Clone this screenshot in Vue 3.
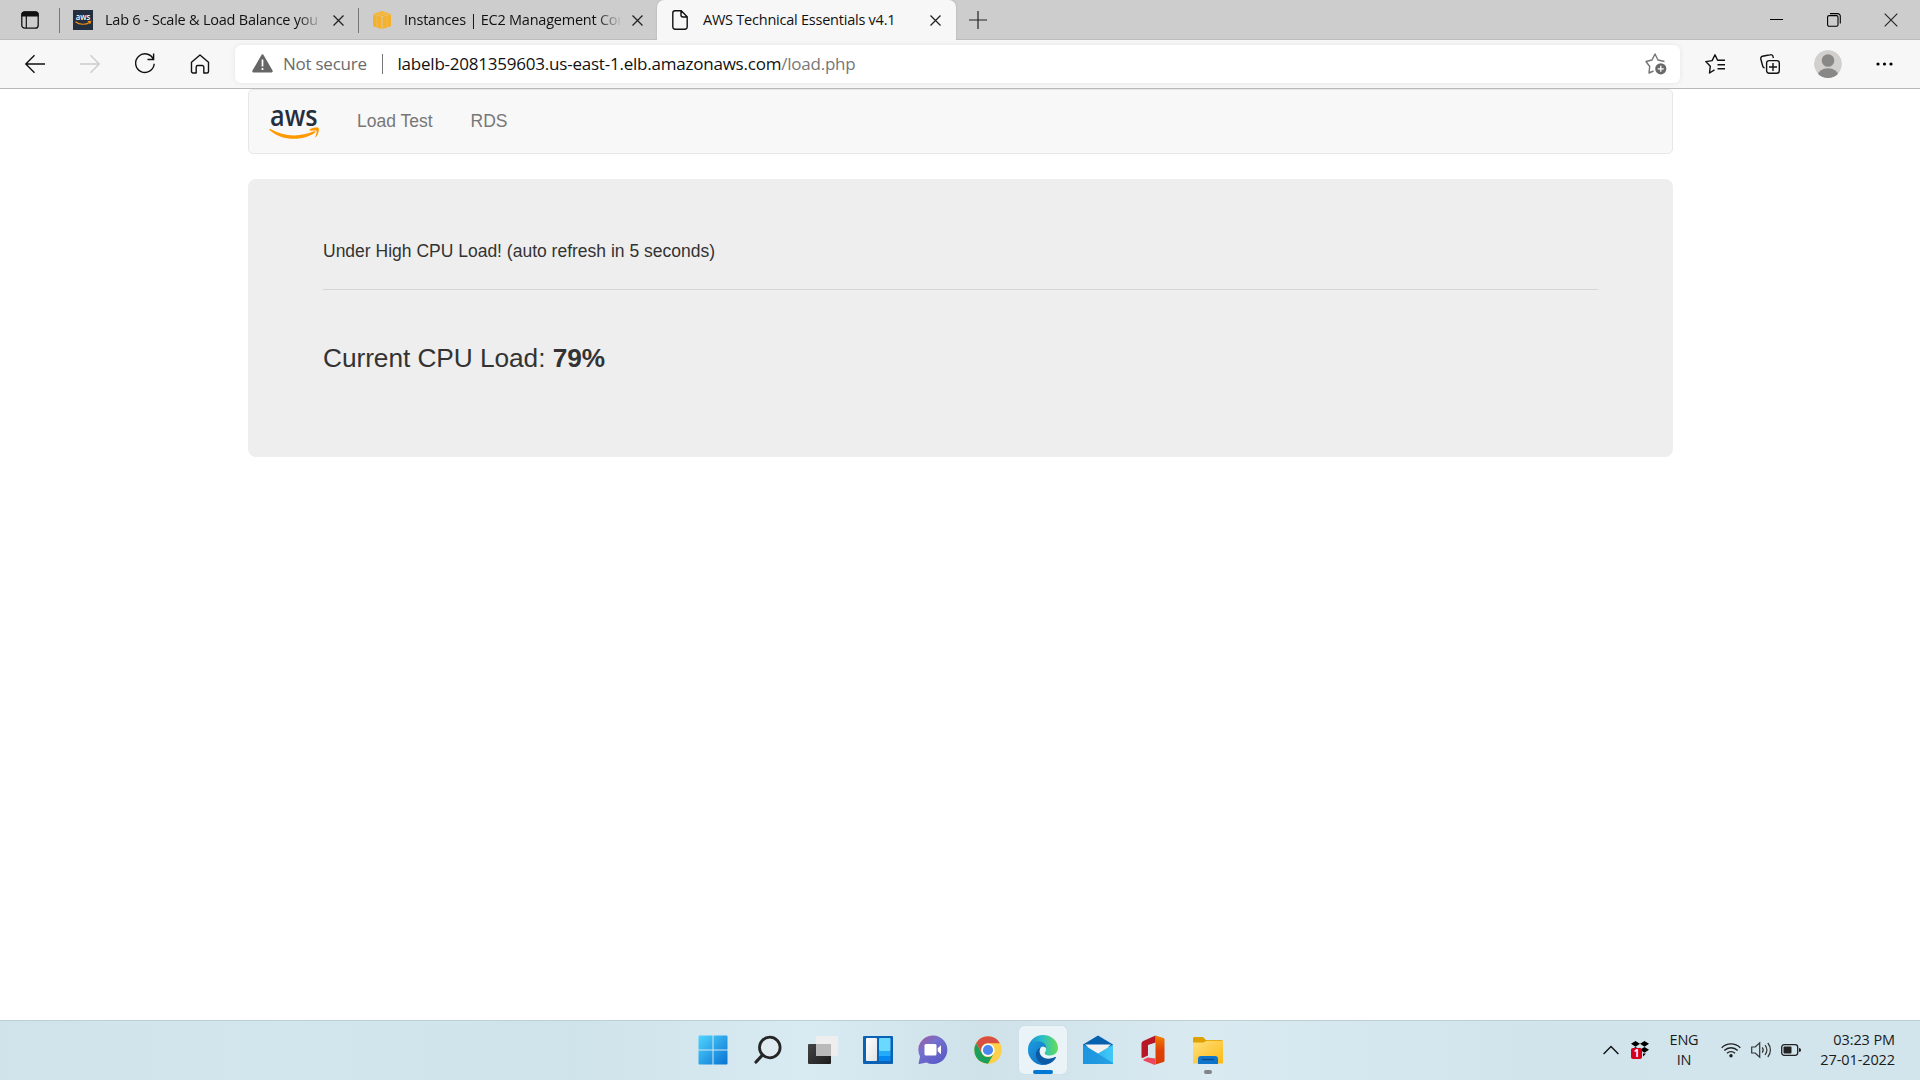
<script setup>
const inactiveTabs = [
  { id: 'lab', title: 'Lab 6 - Scale & Load Balance you' },
  { id: 'ec2', title: 'Instances | EC2 Management Con' },
]
</script>

<template>
  <div class="screen">
    <header class="tabstrip">
      <svg class="tab-actions" width="18" height="18" viewBox="0 0 18 18"><rect x=".8" y=".8" width="16.4" height="16.4" rx="3" fill="none" stroke="#111" stroke-width="1.3" /><path d="M1 5V3a2 2 0 0 1 2-2h12a2 2 0 0 1 2 2v2zM5.3 5v12" stroke="#111" fill="#111" stroke-width="1.2" /></svg>
      <div v-for="tab in inactiveTabs" :key="tab.id" class="tab" :class="tab.id">
        <svg v-if="tab.id === 'lab'" class="fav" width="20" height="20" viewBox="0 0 20 20">
          <rect width="20" height="20" fill="#232f3e" />
          <text x="2.7" y="10.3" textLength="14.5" lengthAdjust="spacingAndGlyphs" font-family="Open Sans, sans-serif" font-weight="600" font-size="9.5" fill="#fff">aws</text>
          <path d="M2.5 11.7c4 3.2 10 3.3 14 .8M14.8 11.5l2.8-.2-.8 2.5" fill="none" stroke="#f29111" stroke-width="1.2" />
        </svg>
        <svg v-else class="fav" width="20" height="20" viewBox="0 0 20 20"><path d="M1 4l9-3 9 3-9 2.400z" fill="#f9b52a" /><path d="M1 4.600l8.600 2.200V19L1 16.300zM19 4.600l-8.600 2.200V19l8.600-2.700z" fill="#f6b02a" /><path d="M4.900 5.800v12M15.100 5.800v12M10 7v12M4.500 3L10 4.400 15.500 3" stroke="#e0c078" fill="none" stroke-width=".8" /></svg>
        <span class="tab-title">{{ tab.title }}</span>
        <svg class="x" width="11" height="11" viewBox="0 0 11 11"><path d="M.5.5l10 10M10.5.5l-10 10" stroke="#222" stroke-width="1.3" /></svg>
      </div>
      <div class="tab active">
        <svg class="doc" width="16" height="20" viewBox="0 0 16 20"><path d="M3 .8h6.200l6 6V17a2.200 2.200 0 0 1-2.200 2.200H3A2.200 2.200 0 0 1 .8 17V3A2.200 2.200 0 0 1 3 .8zM9 1v4a2 2 0 0 0 2 2h4" fill="none" stroke="#111" stroke-width="1.400" /></svg>
        <span class="tab-title">AWS Technical Essentials v4.1</span>
        <svg class="x" width="11" height="11" viewBox="0 0 11 11"><path d="M.5.5l10 10M10.5.5l-10 10" stroke="#222" stroke-width="1.3" /></svg>
      </div>
      <svg class="plus" width="18" height="18" viewBox="0 0 18 18"><path d="M9 0v18M0 9h18" stroke="#222" stroke-width="1.2" /></svg>
      <div class="window-controls">
        <svg width="13" height="14" viewBox="0 0 13 14"><path d="M0 6.500h13" stroke="#000" /></svg>
        <svg width="14" height="14" viewBox="0 0 14 14"><rect x=".6" y="2.6" width="10.400" height="10.600" rx="1.500" fill="none" stroke="#000" stroke-width="1.1" /><path d="M3 .6h7.500a2.700 2.700 0 0 1 2.800 2.800V10.500" fill="none" stroke="#000" stroke-width="1.1" /></svg>
        <svg width="14" height="14" viewBox="0 0 14 14"><path d="M.7.7l12.600 12.600M13.300.7L.7 13.300" stroke="#222" stroke-width="1.1" /></svg>
      </div>
    </header>

    <div class="toolbar">
      <svg class="nav back" width="20" height="20" viewBox="0 0 20 20"><path d="M20 10H.8M9.500 1.200L.8 10l8.700 8.800" fill="none" stroke="#111" stroke-width="1.400" /></svg>
      <svg class="nav" width="20" height="20" viewBox="0 0 20 20"><path d="M0 10h19.200M10.500 1.200L19.200 10l-8.700 8.800" fill="none" stroke="#ccc" stroke-width="1.400" /></svg>
      <svg class="nav" width="20" height="21" viewBox="0 0 20 21"><path d="M18.500 6.500A9.300 9.300 0 1 0 19.200 10.800M18.600.5v6H12.500" fill="none" stroke="#111" stroke-width="1.400" /></svg>
      <svg class="nav" width="20" height="20" viewBox="0 0 20 20"><path d="M1.500 8.200L10 1l8.500 7.200V17.500a1.500 1.500 0 0 1-1.500 1.500h-3.200V13a1.500 1.500 0 0 0-1.500-1.500H7.700A1.500 1.500 0 0 0 6.200 13v6H3a1.500 1.500 0 0 1-1.500-1.500z" fill="none" stroke="#111" stroke-width="1.400" stroke-linejoin="round" /></svg>
      <div class="address">
        <svg width="21" height="19" viewBox="0 0 21 19"><path d="M10.500 1.500L19.500 17.200H1.500z" fill="#666" stroke="#666" stroke-width="2.400" stroke-linejoin="round" /><path d="M10.500 5.500v7M10.500 14v2" stroke="#fff" stroke-width="1.700" /></svg>
        <span class="not-secure">Not secure</span>
        <i class="bar"></i>
        <span class="url">labelb-2081359603.us-east-1.elb.amazonaws.com<em>/load.php</em></span>
        <svg class="star" width="22" height="22" viewBox="0 0 22 22"><path d="M8.500 18L4 20l.7-6.500L1 8.500l6-1.500 3-6 3 6 6.500 1.500" fill="none" stroke="#757575" stroke-width="1.400" stroke-linejoin="round" /><circle cx="15.800" cy="15.800" r="5.600" fill="#696969" /><path d="M15.800 12.800v6M12.800 15.800h6" stroke="#fff" stroke-width="1.300" /></svg>
      </div>
      <svg class="favorites" width="20" height="20" viewBox="0 0 20 20"><path d="M9.500 15.800L4.500 19l.8-6.800L.8 7.600l6.300-1L10 .8l2.600 5.500H20M12.500 10.700H20M12.500 14.800H20" fill="none" stroke="#111" stroke-width="1.400" stroke-linejoin="round" /></svg>
      <svg class="collections" width="20" height="20" viewBox="0 0 20 20"><path d="M4.500 14A3 3 0 0 1 2.700 12L.8 5a2.200 2.200 0 0 1 1.600-2.700L10.300.7A2.200 2.200 0 0 1 13 2.400l.4 1.600" fill="none" stroke="#111" stroke-width="1.400" /><rect x="6.600" y="6.600" width="12.700" height="12.700" rx="2.500" fill="none" stroke="#111" stroke-width="1.400" /><path d="M13 9v8M9 13h8" stroke="#111" stroke-width="1.400" /></svg>
      <svg class="avatar" width="28" height="28" viewBox="0 0 28 28"><defs><clipPath id="avatar-clip"><circle cx="14" cy="14" r="14" /></clipPath></defs><g clip-path="url(#avatar-clip)"><circle cx="14" cy="14" r="14" fill="#d2d0ce" /><circle cx="14" cy="10.500" r="6.300" fill="#8a8886" /><ellipse cx="14" cy="26" rx="10.500" ry="7.800" fill="#8a8886" /></g></svg>
      <svg class="dots" width="17" height="4" viewBox="0 0 17 4"><circle cx="2" cy="2" r="1.600" /><circle cx="8.500" cy="2" r="1.600" /><circle cx="15" cy="2" r="1.600" /></svg>
    </div>

    <main class="page">
      <nav class="navbar">
        <svg class="logo" width="52" height="34" viewBox="0 0 52 34">
          <text x="1" y="18.500" textLength="47.500" lengthAdjust="spacingAndGlyphs" font-family="Open Sans, sans-serif" font-weight="600" font-size="28" fill="#252f3e">aws</text>
          <path d="M.3 22.500c0-.6.700-.8 1.200-.5 13 7.800 29.500 8.300 43.500 2.300 1.200-.5 2 .6.900 1.400C34 34 13 34.500.8 23.200z" fill="#f90" />
          <path d="M40.800 22.300c2.500-1.800 8-2.100 8.800-1.200.8 1-.2 6.800-2.700 9-.5.500-1 .2-.7-.4.600-1.500 1.900-4.900 1.300-5.800-.600-.8-4-.400-6-.2-.900.100-1.200-.8-.7-1.400z" fill="#f90" />
        </svg>
        <a class="link-load">Load Test</a>
        <a>RDS</a>
      </nav>
      <section class="jumbotron">
        <p class="status">Under High CPU Load! (auto refresh in 5 seconds)</p>
        <hr />
        <p class="load">Current CPU Load: <b>79%</b></p>
      </section>
    </main>

    <footer class="taskbar">
      <div class="apps">
        <div class="app"><svg width="30" height="30" viewBox="0 0 30 30"><defs><linearGradient id="win" x2="1" y2="1"><stop stop-color="#4fd5ff" /><stop offset="1" stop-color="#0872d2" /></linearGradient></defs><path d="M1.500.5H14.500V14.500H.5V1.500a1 1 0 0 1 1-1zM15.500.5H28.500a1 1 0 0 1 1 1V14.500H15.500zM.5 15.500H14.500V29.500H1.500a1 1 0 0 1-1-1zM15.500 15.500H29.500V28.500a1 1 0 0 1-1 1H15.500z" fill="url(#win)" /></svg></div>
        <div class="app"><svg width="30" height="30" viewBox="0 0 30 30"><circle cx="16.800" cy="12.500" r="10.300" fill="#e4edf1" fill-opacity=".6" stroke="#262626" stroke-width="2.800" /><path d="M9.500 20L3 27" stroke="#262626" stroke-width="3.200" stroke-linecap="round" /></svg></div>
        <div class="app"><svg width="30" height="30" viewBox="0 0 30 30"><defs><linearGradient id="tv" x2="1" y2="1"><stop stop-color="#444" /><stop offset="1" stop-color="#1d1d1d" /></linearGradient></defs><rect y="9" width="23" height="20" rx="1" fill="url(#tv)" /><rect x="8" y="1" width="22" height="20" rx="1" fill="#eee" /><rect x="8" y="9" width="15" height="12" fill="#b9b9b9" /></svg></div>
        <div class="app"><svg width="30" height="30" viewBox="0 0 30 30"><defs><linearGradient id="wg" y2="1"><stop stop-color="#fff" /><stop offset="1" stop-color="#e2e2e2" /></linearGradient></defs><rect y="1" width="30" height="28" rx="1" fill="#0b62b5" /><rect x="3" y="3" width="11" height="23" rx="1" fill="url(#wg)" /><rect x="16" y="3" width="11.500" height="13" rx="1" fill="#6ad9ff" /><rect x="16" y="16" width="11.500" height="5" fill="#24acf8" /><rect x="16" y="21" width="11.500" height="5" fill="#0788ee" /></svg></div>
        <div class="app"><svg width="30" height="30" viewBox="0 0 30 30"><defs><linearGradient id="chat" x1=".1" y1="0" x2=".9" y2="1"><stop stop-color="#a35b9c" /><stop offset=".35" stop-color="#7470ce" /><stop offset="1" stop-color="#5757c5" /></linearGradient></defs><path d="M15 .5a14.300 14.300 0 1 1-6.500 27L1.500 29c-.8.1-1-.3-.8-1L2 21.500A14.300 14.300 0 0 1 15 .5z" fill="url(#chat)" /><rect x="6.500" y="9" width="12" height="11.500" rx="1.500" fill="#fff" /><path d="M19.700 13.200l3.300-3v9l-3.300-3z" fill="#fff" /></svg></div>
        <div class="app"><svg width="28" height="28" viewBox="0 0 28 28"><circle cx="14" cy="14" r="13.700" fill="#fcd04b" /><path d="M2.100 7.200A13.700 13.700 0 0 1 25.900 7.200H14a6.800 6.800 0 0 0-6 10.200z" fill="#d94f43" /><path d="M2.100 7.200A13.700 13.700 0 0 0 14 27.700L20 17.300a6.800 6.800 0 0 1-12 .1z" fill="#1c9f5b" /><circle cx="14" cy="14" r="6.600" fill="#fff" /><circle cx="14" cy="14" r="5.100" fill="#4a87f1" /></svg></div>
        <div class="app current"><svg width="30" height="30" viewBox="0 0 30 30"><defs><linearGradient id="e1"><stop stop-color="#1b88d3" /><stop offset=".45" stop-color="#27bccc" /><stop offset="1" stop-color="#66dd56" /></linearGradient><linearGradient id="e2" y2="1"><stop stop-color="#1b9de2" /><stop offset="1" stop-color="#116bbb" /></linearGradient></defs><path d="M0 14A15 15 0 0 1 15 0C24 0 30 6.500 30 13c0 4.500-3.500 7.500-8 7.500-4.500 0-6-1.700-5-3.200C20.500 12.500 15 8 8.500 8 3.500 8 1 11 0 14z" fill="url(#e1)" /><path d="M0 14c.5-4 4-7.800 9.500-7.800 5.500 0 9 3 9 7.800 0-1.500-2-2.500-4-2.500-6 2-6.500 16 5 17.800A15 15 0 0 1 0 14z" fill="url(#e2)" /><path d="M12.600 12.700C9 14 7.300 17.500 8.200 21.500 9.800 27.500 15 30 19.500 29.300c4-1 6.500-3.300 8.400-6.500.4-.8-.3-1.100-1-.700-7 3.600-15 1-15.300-5.500 0-1.500.5-2.900 1-3.900z" fill="#0c59a4" /></svg></div>
        <div class="app"><svg width="30" height="30" viewBox="0 0 30 30"><defs><linearGradient id="mail" x2="1"><stop stop-color="#23a5eb" /><stop offset="1" stop-color="#42c9f6" /></linearGradient></defs><path d="M0 9.500L15 .5l15 9V12H0z" fill="#0861ae" /><path d="M2 9.500h26L15 21z" fill="#f2f2f2" /><path d="M0 9.500l15 9 15-9V29H0z" fill="url(#mail)" /><path d="M0 9.500L30 28v1H0z" fill="#188bd9" opacity=".65" /></svg></div>
        <div class="app"><svg width="24" height="30" viewBox="0 0 24 30"><defs><linearGradient id="off" x2="0" y2="1"><stop stop-color="#f28100" /><stop offset=".5" stop-color="#df4307" /><stop offset="1" stop-color="#d73b02" /></linearGradient></defs><path d="M14.500.5l8 2.500a1.500 1.500 0 0 1 1 1.500v21a1.500 1.500 0 0 1-1 1.500l-8 2.500z" fill="url(#off)" /><path d="M14.500.5v7L7 10v10.500L1.500 23A1 1 0 0 1 .5 22V8.500A3 3 0 0 1 2.200 6z" fill="#b91727" /><path d="M2.500 24.500l4-2 8 1v6a3 3 0 0 1-2 0l-10-4z" fill="#ef465b" /></svg></div>
        <div class="app explorer"><svg width="30" height="28" viewBox="0 0 30 28"><defs><linearGradient id="folder" x2="1" y2="1"><stop stop-color="#ffe07b" /><stop offset="1" stop-color="#fcb914" /></linearGradient></defs><path d="M0 8V2.500A1.500 1.500 0 0 1 1.500 1H10l3 3h15.500A1.500 1.500 0 0 1 30 5.500V9H0z" fill="#dfa001" /><path d="M0 6.500h10.500l3-1.700H30V27.500H0z" fill="url(#folder)" /><path d="M5 28v-5a3 3 0 0 1 3-3h14a3 3 0 0 1 3 3v5z" fill="#0f75cb" /><path d="M9 23.500h12" stroke="#0a4a86" stroke-width="1.300" /></svg></div>
      </div>
      <div class="tray">
        <svg class="chevron" width="16" height="10" viewBox="0 0 16 10"><path d="M.6 9L8 1.500 15.400 9" fill="none" stroke="#111" stroke-width="1.400" /></svg>
        <div class="dropbox">
          <svg width="18" height="17" viewBox="0 0 18 17"><path d="M4.500 0L9 2.800 4.500 5.700 0 2.800zM13.500 0L18 2.800l-4.500 2.900L9 2.800zM4.500 6L9 8.800l-4.500 2.900L0 8.800zM13.500 6L18 8.800l-4.500 2.900L9 8.800zM12 12.500h3l-3 3z" /></svg>
          <span class="badge">1</span>
        </div>
        <div class="lang"><span>ENG</span><span>IN</span></div>
        <svg class="wifi" width="20" height="16" viewBox="0 0 20 16"><path d="M.7 5.800a13.200 13.200 0 0 1 18.600 0M3.300 8.500a9.500 9.500 0 0 1 13.400 0M6 11.200a5.700 5.700 0 0 1 8 0" fill="none" stroke="#222" stroke-width="1.300" /><circle cx="10" cy="13.800" r="1.700" fill="#222" /></svg>
        <svg class="speaker" width="21" height="18" viewBox="0 0 21 18"><path d="M.7 6h3.500L8.700 1.800v14.400L4.200 12H.7zM11.200 6.300c1.200 1.600 1.200 3.800 0 5.400M14 4.200c2.300 2.900 2.300 6.700 0 9.600M16.800 2c3.500 4.200 3.500 9.800 0 14" fill="none" stroke="#333" stroke-width="1.200" /></svg>
        <svg class="battery" width="20" height="12" viewBox="0 0 20 12"><rect x=".7" y=".7" width="16" height="10.600" rx="2.500" fill="none" stroke="#222" stroke-width="1.300" /><rect x="2.500" y="2.500" width="8" height="7" rx="1" fill="#222" /><path d="M18 4v4c1.500 0 2-1 2-2s-.5-2-2-2z" fill="#222" /></svg>
        <div class="clock"><span class="time">03:23 PM</span><span>27-01-2022</span></div>
      </div>
    </footer>
  </div>
</template>

<style>
body { margin: 0; background: #fff; }
</style>

<style scoped>
* { box-sizing: border-box; }
svg { display: block; flex: none; overflow: visible; }
.screen { width: 1920px; height: 1080px; display: flex; flex-direction: column; overflow: hidden; font-family: "Open Sans", "Noto Sans", sans-serif; background: #fff; }
.tabstrip { height: 40px; display: flex; align-items: center; background: #cdcdcd; box-shadow: inset 0 -1px #bcbcbc; flex: none; }
.tab-actions { margin: 0 20px 0 21px; }
.tab { height: 40px; display: flex; align-items: center; width: 299px; flex: none; position: relative; }
.tab:not(.active)::before { content: ""; position: absolute; left: 0; top: 8px; width: 1px; height: 25px; background: #777; }
.fav { margin-left: 14px; }
.tab-title { margin-left: 12px; width: 216px; white-space: nowrap; font-size: 14.5px; line-height: 22px; letter-spacing: -.23px; color: #111; }
.tab:not(.active) .tab-title { -webkit-mask: linear-gradient(90deg, #000 89%, transparent 101%); mask: linear-gradient(90deg, #000 89%, transparent 101%); }
.x { margin: 1px 0 0 12px; }
.active { background: #f7f7f7; border-radius: 7px 7px 0 0; box-shadow: 0 0 2px #aaa; clip-path: inset(0 -3px 0 -3px); }
.doc { margin-left: 15px; }
.active .tab-title { margin-left: 15px; width: 214px; }
.active .x { margin-left: 13px; }
.plus { margin-left: 13px; }
.window-controls { margin: 0 22px 0 auto; display: flex; align-items: center; gap: 43.5px; }
.toolbar { height: 49px; display: flex; align-items: center; padding-bottom: 1px; background: #f7f7f7; border-bottom: 1px solid #b8b8b8; flex: none; }
.nav { margin-right: 35px; }
.nav.back { margin-left: 25px; }
.address { margin-left: -10px; width: 1445px; height: 38px; border-radius: 6px; background: #fff; box-shadow: 0 0 5px #e4e4e4; display: flex; align-items: center; padding: 0 13px 0 17px; font-size: 17px; line-height: 26px; flex: none; }
.not-secure { margin-left: 10px; width: 84px; white-space: nowrap; color: #6b6b6b; letter-spacing: -.25px; }
.bar { width: 1px; height: 20px; margin: 0 15px 0 14.5px; background: #777; }
.url { color: #111; white-space: nowrap; letter-spacing: -.22px; }
.url em { font-style: normal; color: #777; }
.star { margin-left: auto; }
.favorites { margin-left: 25px; }
.collections { margin-left: 35px; }
.avatar { margin-left: 34px; }
.dots { margin-left: 34px; }
.page { flex: 1; display: flex; flex-direction: column; padding-left: 248px; font-family: "Liberation Sans", Arial, sans-serif; }
.navbar { width: 1425px; height: 65px; border: 1px solid #e7e7e7; border-radius: 5px; background: #f8f8f8; display: flex; align-items: center; padding-left: 20px; font-size: 17.5px; color: #777; flex: none; }
.logo { margin-top: 5px; }
.link-load { margin: 0 38px 0 36px; }
.jumbotron { width: 1425px; height: 278px; margin-top: 25px; padding: 60px 75px 0; border-radius: 8px; background: #eee; color: #333; }
.status { margin: 0; font-size: 17.5px; line-height: 25px; }
hr { margin: 25px 0; border: 0; border-top: 1px solid #d5d5d5; }
.load { margin: 54px 0 0; font-size: 26.25px; line-height: 29px; letter-spacing: -.05px; }
.taskbar { height: 62px; padding-bottom: 2px; display: grid; grid-template-columns: 688.5px 1fr auto; background: linear-gradient(90deg, #d0e3eb 0%, #d2e6ed 15%, #cfe3eb 30%, #d8eaf2 42%, #cfe1e9 51%, #d9eaf1 63%, #d1e4ec 80%, #d3e5ec 100%); border-top: 1px solid #bdced5; flex: none; color: #1b1b1b; height: 60px; }
.apps { grid-column: 2; display: flex; align-items: center; gap: 7.1px; }
.app { width: 48px; height: 48px; display: flex; align-items: center; justify-content: center; position: relative; }
.current { background: #eaf3f8; border-radius: 5px; box-shadow: 0 0 1px #b2c4cc; }
.current::after, .explorer::after { content: ""; position: absolute; bottom: 0; width: 20px; height: 4px; border-radius: 2px; background: #0078d4; }
.explorer::after { width: 8px; background: #808587; }
.tray { display: flex; align-items: center; padding-right: 25px; font-size: 14.5px; line-height: 20px; }
.dropbox { position: relative; margin-left: 12px; }
.badge { position: absolute; left: 0; top: 7px; width: 11px; height: 11px; border-radius: 2px; background: #d6001c; color: #fff; font-size: 10px; line-height: 11px; font-weight: 700; text-align: center; }
.lang { width: 36px; margin-left: 17px; display: flex; flex-direction: column; align-items: center; letter-spacing: -.2px; }
.wifi { margin-left: 19px; }
.speaker { margin-left: 10px; }
.battery { margin-left: 9px; }
.clock { width: 94px; display: flex; flex-direction: column; align-items: flex-end; white-space: nowrap; letter-spacing: -.1px; }
</style>
